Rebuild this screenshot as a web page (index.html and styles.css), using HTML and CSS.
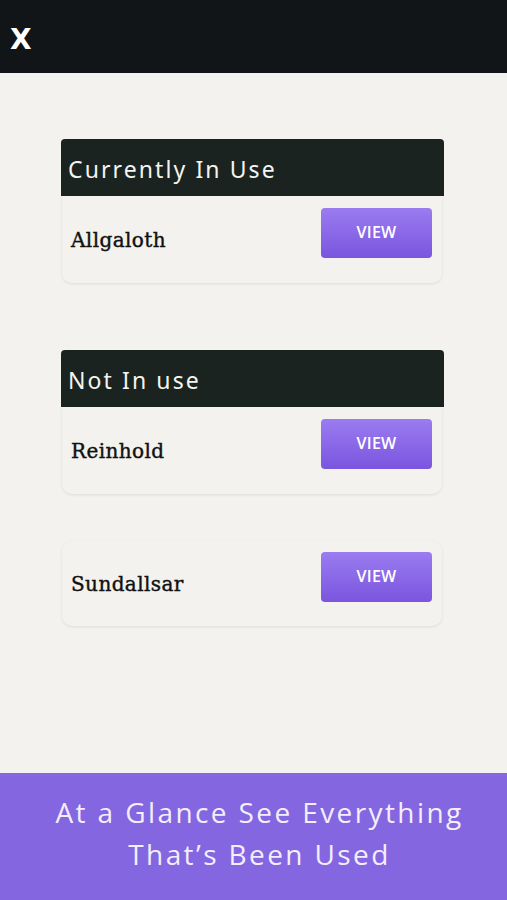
FILE: index.html
```html
<!DOCTYPE html>
<html lang="en">
<head>
  <meta charset="UTF-8" />
  <meta name="viewport" content="width=device-width, initial-scale=1.0" />
  <title>At a Glance</title>
  <link rel="stylesheet" href="styles.css">
</head>
<body>
  <div class="topbar">
    <span class="close">X</span>
  </div>

  <main class="content">
    <section class="group">
      <h2 class="group-title">Currently In Use</h2>
      <div class="item">
        <span class="item-name">Allgaloth</span>
        <button class="view">VIEW</button>
      </div>
    </section>

    <section class="group">
      <h2 class="group-title">Not In use</h2>
      <div class="item">
        <span class="item-name">Reinhold</span>
        <button class="view">VIEW</button>
      </div>
      <div class="item item-solo">
        <span class="item-name">Sundallsar</span>
        <button class="view">VIEW</button>
      </div>
    </section>
  </main>

  <footer class="banner">
    <p>At a Glance See Everything<br>That’s Been Used</p>
  </footer>
</body>
</html>
```

FILE: styles.css
```css
* {
  box-sizing: border-box;
}
body {
  margin: 0;
  height: 900px;
  display: flex;
  flex-direction: column;
  background-color: #f3f2ee;
  font-family: "Open Sans", sans-serif;
}
.topbar {
  height: 73px;
  background-color: #121518;
  padding: 25px 0 0 10px;
}
.close {
  color: #fff;
  font-family: "DejaVu Sans", sans-serif;
  font-weight: bold;
  font-size: 28px;
  line-height: 30px;
}
.content {
  flex: 1;
  padding: 66px 63px 0 61px;
}
.group {
  margin-bottom: 67px;
}
.group-title {
  margin: 0;
  height: 57px;
  padding: 14px 0 0 7px;
  background-color: #1b2320;
  border-radius: 4px 4px 0 0;
  color: #f4f4f0;
  font-family: "Noto Sans", sans-serif;
  font-weight: normal;
  font-size: 23px;
  letter-spacing: 2.1px;
  line-height: 32px;
}
.item {
  margin: 0 2px 0 1px;
  height: 87px;
  padding: 12px 10px 0 9px;
  display: flex;
  justify-content: space-between;
  align-items: flex-start;
  background-color: #f3f2ee;
  border-radius: 0 0 10px 10px;
  box-shadow: 0 1px 3px rgba(0, 0, 0, 0.09);
}
.item-solo {
  margin-top: 47px;
  height: 85px;
  padding-top: 11px;
  border-radius: 10px;
}
.item-name {
  margin-top: 20px;
  font-family: "DejaVu Serif", serif;
  font-size: 20px;
  letter-spacing: 0.4px;
  color: #111;
  -webkit-text-stroke: 0.4px #111;
}
.view {
  width: 111px;
  height: 50px;
  border: none;
  border-radius: 4px;
  background: linear-gradient(#9b7cf0, #7a55df);
  color: #fff;
  font-family: "Open Sans", sans-serif;
  font-weight: 600;
  font-size: 16px;
  letter-spacing: 0.3px;
  padding: 0 0 2px;
  cursor: pointer;
}
.banner {
  height: 127px;
  background-color: #8466e0;
  display: flex;
  justify-content: center;
  padding: 18px 0 0 12px;
}
.banner p {
  margin: 0;
  color: #f2eefc;
  font-family: "Open Sans", sans-serif;
  font-weight: normal;
  font-size: 28px;
  letter-spacing: 2.4px;
  line-height: 42px;
  text-align: center;
}
```
